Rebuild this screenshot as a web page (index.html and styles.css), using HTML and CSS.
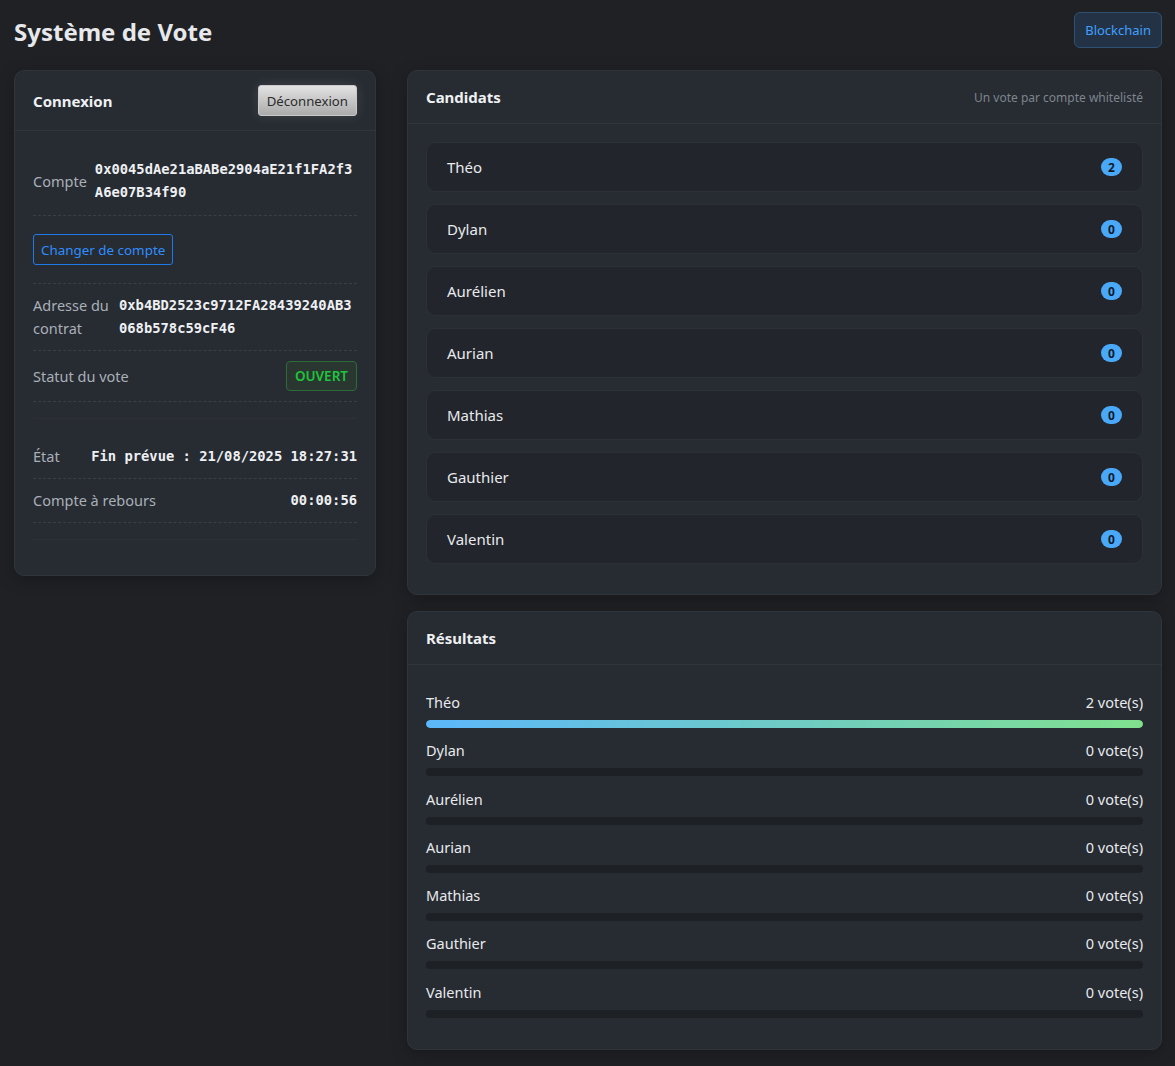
FILE: index.html
```html
<!DOCTYPE html>
<html lang="fr">
<head>
<meta charset="utf-8">
<title>Système de Vote</title>
<link rel="stylesheet" href="styles.css">
</head>
<body>
<header class="topbar">
  <h1 class="title">Système de Vote</h1>
  <button class="btn-chain">Blockchain</button>
</header>
<main class="layout">
  <section class="card card-left">
    <div class="card-head head-left">
      <h2 class="card-title">Connexion</h2>
      <button class="btn-logout">Déconnexion</button>
    </div>
    <div class="card-body left-body">
      <div class="row row-first">
        <span class="label">Compte</span>
        <span class="mono">0x0045dAe21aBABe2904aE21f1FA2f3<br>A6e07B34f90</span>
      </div>
      <div class="row row-btn">
        <button class="btn-switch">Changer de compte</button>
      </div>
      <div class="row">
        <span class="label label-wrap">Adresse du contrat</span>
        <span class="mono">0xb4BD2523c9712FA28439240AB3<br>068b578c59cF46</span>
      </div>
      <div class="row row-between">
        <span class="label">Statut du vote</span>
        <span class="badge-open">OUVERT</span>
      </div>
      <div class="spacer"></div>
      <div class="row row-between row-state">
        <span class="label">État</span>
        <span class="mono">Fin prévue : 21/08/2025 18:27:31</span>
      </div>
      <div class="row row-between">
        <span class="label">Compte à rebours</span>
        <span class="mono">00:00:56</span>
      </div>
      <div class="spacer"></div>
    </div>
  </section>
  <div class="right-col">
    <section class="card">
      <div class="card-head head-right">
        <h2 class="card-title">Candidats</h2>
        <span class="subtitle">Un vote par compte whitelisté</span>
      </div>
      <div class="card-body cand-list">
        <div class="cand"><span>Théo</span><span class="count">2</span></div>
        <div class="cand"><span>Dylan</span><span class="count">0</span></div>
        <div class="cand"><span>Aurélien</span><span class="count">0</span></div>
        <div class="cand"><span>Aurian</span><span class="count">0</span></div>
        <div class="cand"><span>Mathias</span><span class="count">0</span></div>
        <div class="cand"><span>Gauthier</span><span class="count">0</span></div>
        <div class="cand"><span>Valentin</span><span class="count">0</span></div>
      </div>
    </section>
    <section class="card">
      <div class="card-head head-right">
        <h2 class="card-title">Résultats</h2>
      </div>
      <div class="card-body results">
        <div class="res"><div class="res-line"><span>Théo</span><span>2 vote(s)</span></div><div class="track"><div class="fill" style="width:100%"></div></div></div>
        <div class="res"><div class="res-line"><span>Dylan</span><span>0 vote(s)</span></div><div class="track"><div class="fill" style="width:0%"></div></div></div>
        <div class="res"><div class="res-line"><span>Aurélien</span><span>0 vote(s)</span></div><div class="track"><div class="fill" style="width:0%"></div></div></div>
        <div class="res"><div class="res-line"><span>Aurian</span><span>0 vote(s)</span></div><div class="track"><div class="fill" style="width:0%"></div></div></div>
        <div class="res"><div class="res-line"><span>Mathias</span><span>0 vote(s)</span></div><div class="track"><div class="fill" style="width:0%"></div></div></div>
        <div class="res"><div class="res-line"><span>Gauthier</span><span>0 vote(s)</span></div><div class="track"><div class="fill" style="width:0%"></div></div></div>
        <div class="res"><div class="res-line"><span>Valentin</span><span>0 vote(s)</span></div><div class="track"><div class="fill" style="width:0%"></div></div></div>
      </div>
    </section>
  </div>
</main>
</body>
</html>
```

FILE: styles.css
```css
* { box-sizing: border-box; }
html, body { margin: 0; }
body {
  background: #1f2125;
  color: #e4e7ea;
  font-family: "Noto Sans", "Open Sans", sans-serif;
  font-size: 14.5px;
  padding: 12px 13px 18px 14px;
  min-height: 1066px;
}
button { font-family: inherit; cursor: pointer; }

.topbar {
  display: flex;
  justify-content: space-between;
  align-items: flex-start;
  height: 58px;
}
.title {
  margin: 0;
  padding-top: 3px;
  font-size: 24px;
  font-weight: 700;
  color: #e6e8eb;
}
.btn-chain {
  background: #233345;
  border: 1px solid #2e5274;
  color: #3fa0ff;
  border-radius: 6px;
  font-size: 13px;
  height: 36px;
  padding: 0 10px;
}

.layout {
  display: grid;
  grid-template-columns: 362px 1fr;
  gap: 31px;
  align-items: start;
}
.card {
  background: #272b32;
  border: 1px solid #30343b;
  border-radius: 10px;
  box-shadow: 0 4px 16px rgba(0,0,0,0.25);
}
.card-head {
  display: flex;
  justify-content: space-between;
  align-items: center;
  border-bottom: 1px solid #31353c;
  padding: 0 18px;
}
.head-left { height: 60px; }
.head-right { height: 53px; }
.card-title {
  margin: 0;
  font-size: 15px;
  font-weight: 700;
  color: #eef0f2;
}
.btn-logout {
  background: linear-gradient(#e2e2e2, #ababab);
  border: 1px solid #c9c9c9;
  border-radius: 3px;
  color: #2b2b2b;
  font-size: 13.2px;
  height: 31px;
  padding: 0 8px;
  box-shadow: 0 0 12px rgba(255,255,255,0.12);
}
.subtitle { font-size: 12px; color: #7e858d; }

.left-body { padding: 16px 18px 35px 18px; }
.row {
  display: flex;
  align-items: center;
  gap: 8px;
  padding: 10px 0;
  border-bottom: 1px dashed #3a3e45;
  line-height: 23px;
}
.row-first { padding-top: 11px; padding-bottom: 11px; }
.row-btn { padding: 18px 0 18px 0; }
.row-between { justify-content: space-between; }
.row-state { padding-top: 26px; }
.label { color: #a9b0b8; white-space: nowrap; }
.label-wrap { white-space: normal; width: 78px; }
.mono {
  font-family: "DejaVu Sans Mono", "Liberation Mono", monospace;
  font-size: 13.8px;
  color: #eef0f3;
  font-weight: 700;
  line-height: 23px;
}
.btn-switch {
  background: transparent;
  border: 1px solid #1f7ae8;
  color: #2f8eff;
  border-radius: 3px;
  font-size: 13.4px;
  height: 31px;
  padding: 0 7px;
}
.badge-open {
  border: 1px solid #2f6a3c;
  background: #2a3731;
  color: #1fc43c;
  border-radius: 4px;
  height: 30px;
  line-height: 28px;
  padding: 0 8px;
  font-size: 13.5px;
  font-weight: 600;
}
.spacer { height: 17px; border-bottom: 1px solid #2d3137; }

.right-col { display: flex; flex-direction: column; gap: 16px; }
.cand-list {
  display: flex;
  flex-direction: column;
  gap: 12px;
  padding: 18px 18px 30px 18px;
}
.cand {
  display: flex;
  justify-content: space-between;
  align-items: center;
  height: 50px;
  padding: 0 20px;
  background: #22252b;
  border: 1px solid #2c3037;
  border-radius: 10px;
  font-size: 15px;
  color: #e8eaed;
}
.count {
  width: 21px;
  height: 18px;
  border-radius: 9px;
  background: #4aa8f8;
  color: #0e1a26;
  font-size: 12px;
  font-weight: 700;
  display: flex;
  align-items: center;
  justify-content: center;
}
.results {
  display: flex;
  flex-direction: column;
  gap: 11.3px;
  padding: 26px 18px 31px 18px;
}
.res-line {
  display: flex;
  justify-content: space-between;
  font-size: 14.5px;
  color: #e8eaed;
  line-height: 22px;
  margin-bottom: 7px;
}
.track {
  height: 8px;
  background: #1d2024;
  border-radius: 4px;
  overflow: hidden;
}
.fill {
  height: 100%;
  border-radius: 4px;
  background: linear-gradient(90deg, #5cb7fb, #80e08e);
}
```
